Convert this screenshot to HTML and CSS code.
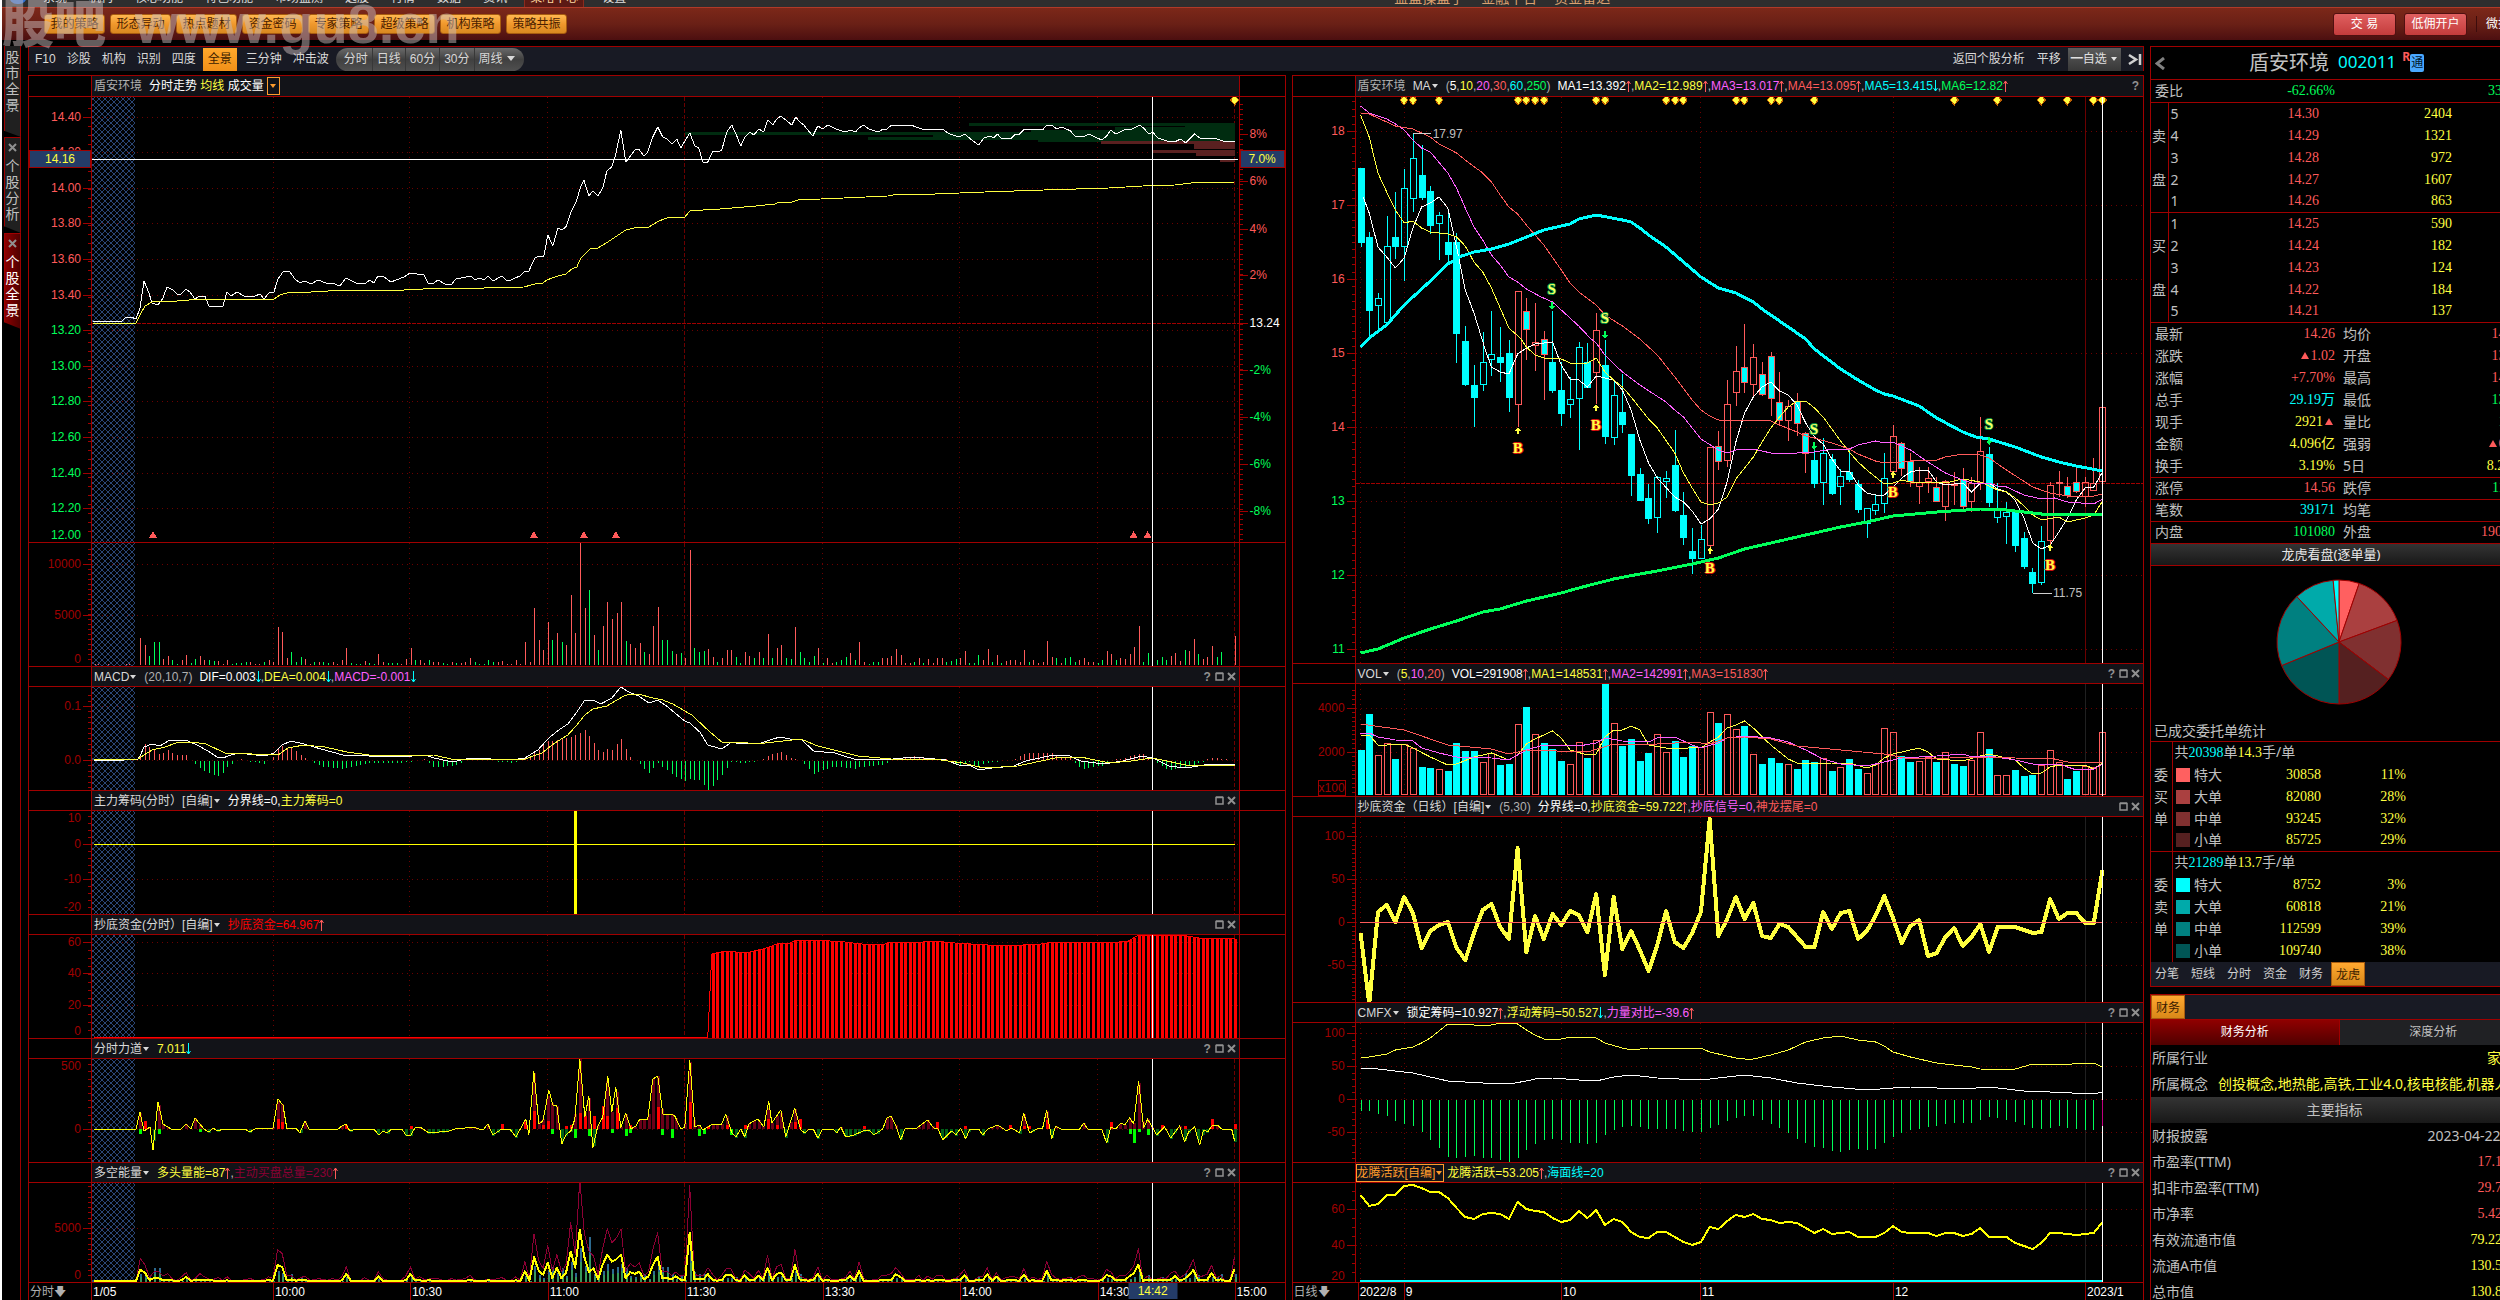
FILE: index.html
```html
<!DOCTYPE html>
<html lang="zh-CN">

<head>
  <meta charset="utf-8">
  <title>盾安环境 002011</title>
  <link rel="stylesheet" href="styles.css">
</head>

<body>
  <svg class="defs" width="0" height="0">
    <defs>
      <symbol id="up" viewBox="0 0 5 12"><path d="M2.5 12V1M0.5 4L2.5 1L4.5 4" fill="none" stroke="#ff5a5a" /></symbol>
      <symbol id="down" viewBox="0 0 5 12"><path d="M2.5 0V11M0.5 8L2.5 11L4.5 8" fill="none" stroke="#00ffff" /></symbol>
      <symbol id="box" viewBox="0 0 9 9"><path d="M1 1.5H8V8H1ZM1 1H8" fill="none" stroke="#909090" stroke-width="1.5" /></symbol>
      <symbol id="close" viewBox="0 0 9 9"><path d="M1 1L8 8M8 1L1 8" fill="none" stroke="#909090" stroke-width="2" /></symbol>
      <pattern id="hatch" width="6" height="6" patternUnits="userSpaceOnUse">
        <path d="M0 0L6 6M6 0L0 6" stroke="#2b4676" fill="none" />
      </pattern>
    </defs>
  </svg>

  <nav class="menu">
    <i class="logo"></i>
    <a href="#" class="m1">系统</a><a href="#" class="m2">机构</a><a href="#" class="m3">核心功能</a><a href="#" class="m3">特色功能</a><a href="#" class="m3">市场监测</a><a href="#" class="m2">选股</a><a href="#" class="m2">行情</a><a href="#" class="m2">数据</a><a href="#" class="m4">资讯</a><a href="#" class="on">策略中心</a><a href="#">设置</a>
    <div class="brand"><span>益盟操盘手</span><span>金融平台</span><span>资金雷达</span></div>
  </nav>

  <header class="toolbar">
    <button>我的策略</button>
    <button>形态异动</button>
    <button>热点题材</button>
    <button>资金密码</button>
    <button>专家策略</button>
    <button>超级策略</button>
    <button>机构策略</button>
    <button>策略共振</button>
    <div class="account">
      <button class="trade">交 易</button>
      <button class="trade">低佣开户</button>
      <a href="#">微拍</a>
    </div>
  </header>
  <div class="watermark"><b>股吧</b><span>www.gu8.cn</span></div>

  <div class="app">
    <div class="strip">
      <button class="tab first"><span>股市全景</span></button>
      <button class="tab"><svg width="9" height="9"><use href="#close" /></svg><span>个股分析</span></button>
      <button class="tab active"><svg width="9" height="9"><use href="#close" /></svg><span>个股全景</span></button>
    </div>

    <main>
      <nav class="views">
        <a href="#">F10</a><a href="#">诊股</a><a href="#">机构</a><a href="#">识别</a><a href="#">四度</a><a href="#" class="on">全景</a><a href="#">三分钟</a><a href="#">冲击波</a>
        <div class="period"><button>分时</button><button>日线</button><button>60分</button><button>30分</button><button>周线 <i class="caret big"></i></button></div>
        <div class="right">
          <a href="#">返回个股分析</a><a href="#">平移</a>
          <button class="pick">━自选 <i class="caret"></i></button>
          <svg width="14" height="13" viewBox="0 0 14 13"><path d="M1 2L8 6.5L1 11M12 1V12" fill="none" stroke="#d0d0d0" stroke-width="2.5" /></svg>
        </div>
      </nav>

      <div class="panels">
        <section class="panel minute">
          <div class="head"><div class="bar"><span class="gray gap">盾安环境</span><span class="white">分时走势 </span><span class="yellow">均线 </span><span class="white">成交量</span><button class="pickbox"><i class="caret"></i></button></div></div>
          <div class="pane" id="price"></div>
          <div class="pane" id="volume"></div>
          <div class="head"><div class="bar"><span class="name">MACD<i class="caret"></i></span><span class="gray gap">(20,10,7)</span><span class="white">DIF=0.003</span><svg class="ar"><use href="#down" /></svg>,<span class="yellow">DEA=0.004</span><svg class="ar"><use href="#down" /></svg>,<span class="pink">MACD=-0.001</span><svg class="ar"><use href="#down" /></svg>
              <div class="tools"><button>?</button><button><svg><use href="#box" /></svg></button><button><svg><use href="#close" /></svg></button></div></div></div>
          <div class="pane" id="macd"></div>
          <div class="head"><div class="bar"><span class="name">主力筹码(分时）[自编]<i class="caret"></i></span><span class="white">分界线=0,</span><span class="yellow">主力筹码=0</span>
              <div class="tools"><button><svg><use href="#box" /></svg></button><button><svg><use href="#close" /></svg></button></div></div></div>
          <div class="pane" id="chips"></div>
          <div class="head"><div class="bar"><span class="name">抄底资金(分时）[自编]<i class="caret"></i></span><span class="bright">抄底资金=64.967</span><svg class="ar"><use href="#up" /></svg>
              <div class="tools"><button><svg><use href="#box" /></svg></button><button><svg><use href="#close" /></svg></button></div></div></div>
          <div class="pane" id="fund"></div>
          <div class="head"><div class="bar"><span class="name">分时力道<i class="caret"></i></span><span class="yellow">7.011</span><svg class="ar"><use href="#down" /></svg>
              <div class="tools"><button>?</button><button><svg><use href="#box" /></svg></button><button><svg><use href="#close" /></svg></button></div></div></div>
          <div class="pane" id="force"></div>
          <div class="head"><div class="bar"><span class="name">多空能量<i class="caret"></i></span><span class="yellow">多头量能=87</span><svg class="ar"><use href="#up" /></svg>,<span class="maroon">主动买盘总量=230</span><svg class="ar"><use href="#up" /></svg>
              <div class="tools"><button>?</button><button><svg><use href="#box" /></svg></button><button><svg><use href="#close" /></svg></button></div></div></div>
          <div class="pane" id="energy"></div>
          <div class="times" id="timesL"><span class="unit">分时🡇</span></div>
        </section>

        <section class="panel daily">
          <div class="head"><div class="bar"><span class="gray gap">盾安环境</span><span class="name">MA<i class="caret"></i></span><span class="gap gray">(<span class="white">5</span>,<span class="yellow">10</span>,<span class="pink">20</span>,<span class="red">30</span>,<span class="cyan">60</span>,<span class="green">250</span>)</span><span class="white">MA1=13.392</span><svg class="ar"><use href="#up" /></svg>,<span class="yellow">MA2=12.989</span><svg class="ar"><use href="#up" /></svg>,<span class="pink">MA3=13.017</span><svg class="ar"><use href="#up" /></svg>,<span class="red">MA4=13.095</span><svg class="ar"><use href="#up" /></svg>,<span class="cyan">MA5=13.415</span><svg class="ar"><use href="#down" /></svg>,<span class="green">MA6=12.82</span><svg class="ar"><use href="#up" /></svg>
              <div class="tools"><button>?</button></div></div></div>
          <div class="pane" id="kline"></div>
          <div class="head"><div class="bar"><span class="name">VOL<i class="caret"></i></span><span class="gray gap">(<span class="yellow">5</span>,<span class="pink">10</span>,<span class="red">20</span>)</span><span class="white">VOL=291908</span><svg class="ar"><use href="#up" /></svg>,<span class="yellow">MA1=148531</span><svg class="ar"><use href="#up" /></svg>,<span class="pink">MA2=142991</span><svg class="ar"><use href="#up" /></svg>,<span class="red">MA3=151830</span><svg class="ar"><use href="#up" /></svg>
              <div class="tools"><button>?</button><button><svg><use href="#box" /></svg></button><button><svg><use href="#close" /></svg></button></div></div></div>
          <div class="pane" id="dvol"></div>
          <div class="head"><div class="bar"><span class="name">抄底资金（日线）[自编]<i class="caret"></i></span><span class="gray gap">(5,30)</span><span class="white">分界线=0,</span><span class="yellow">抄底资金=59.722</span><svg class="ar"><use href="#up" /></svg>,<span class="pink">抄底信号=0,</span><span class="red">神龙摆尾=0</span>
              <div class="tools"><button><svg><use href="#box" /></svg></button><button><svg><use href="#close" /></svg></button></div></div></div>
          <div class="pane" id="dfund"></div>
          <div class="head"><div class="bar"><span class="name">CMFX<i class="caret"></i></span><span class="white">锁定筹码=10.927</span><svg class="ar"><use href="#up" /></svg>,<span class="yellow">浮动筹码=50.527</span><svg class="ar"><use href="#down" /></svg>,<span class="pink">力量对比=-39.6</span><svg class="ar"><use href="#up" /></svg>
              <div class="tools"><button>?</button><button><svg><use href="#box" /></svg></button><button><svg><use href="#close" /></svg></button></div></div></div>
          <div class="pane" id="cmfx"></div>
          <div class="head"><div class="bar"><button class="name picked">龙腾活跃[自编]<i class="caret"></i></button><span class="yellow">龙腾活跃=53.205</span><svg class="ar"><use href="#up" /></svg>,<span class="cyan">海面线=20</span>
              <div class="tools"><button>?</button><button><svg><use href="#box" /></svg></button><button><svg><use href="#close" /></svg></button></div></div></div>
          <div class="pane" id="dragon"></div>
          <div class="times" id="timesR"><span class="unit">日线🡇</span></div>
        </section>
      </div>
    </main>

    <aside>
      <div class="quote">
        <h1><svg width="10" height="13" viewBox="0 0 10 13"><path d="M9 1L2 6.5L9 12" fill="none" stroke="#808080" stroke-width="3" /></svg><span>盾安环境</span><b>002011</b><sup>R</sup><em>通</em></h1>
        <table class="rows">
          <tr class="line"><th>委比</th><td class="green">-62.66%</td><th></th><td class="green">33426</td></tr>
        </table>
        <table class="book">
          <tr><th></th><th>5</th><td>14.30</td><td>2404</td><td></td></tr>
          <tr><th>卖</th><th>4</th><td>14.29</td><td>1321</td><td></td></tr>
          <tr><th></th><th>3</th><td>14.28</td><td>972</td><td></td></tr>
          <tr><th>盘</th><th>2</th><td>14.27</td><td>1607</td><td></td></tr>
          <tr class="line"><th></th><th>1</th><td>14.26</td><td>863</td><td></td></tr>
          <tr><th></th><th>1</th><td>14.25</td><td>590</td><td></td></tr>
          <tr><th>买</th><th>2</th><td>14.24</td><td>182</td><td></td></tr>
          <tr><th></th><th>3</th><td>14.23</td><td>124</td><td></td></tr>
          <tr><th>盘</th><th>4</th><td>14.22</td><td>184</td><td></td></tr>
          <tr class="line"><th></th><th>5</th><td>14.21</td><td>137</td><td></td></tr>
        </table>
        <table class="rows">
          <tr><th>最新</th><td class="red">14.26</td><th>均价</th><td class="red">14.04</td></tr>
          <tr><th>涨跌</th><td class="red"><i class="tri"></i>1.02</td><th>开盘</th><td class="red">13.25</td></tr>
          <tr><th>涨幅</th><td class="red">+7.70%</td><th>最高</th><td class="red">14.40</td></tr>
          <tr><th>总手</th><td class="cyan">29.19万</td><th>最低</th><td class="green">13.22</td></tr>
          <tr><th>现手</th><td class="yellow">2921<i class="tri"></i></td><th>量比</th><td class="green">1.05</td></tr>
          <tr><th>金额</th><td class="yellow">4.096亿</td><th>强弱</th><td class="red"><i class="tri"></i>6.90</td></tr>
          <tr class="line"><th>换手</th><td class="yellow">3.19%</td><th>5日</th><td class="yellow">8.26%</td></tr>
          <tr class="line"><th>涨停</th><td class="red">14.56</td><th>跌停</th><td class="green">11.92</td></tr>
          <tr class="line"><th>笔数</th><td class="cyan">39171</td><th>均笔</th><td></td></tr>
          <tr class="line"><th>内盘</th><td class="green">101080</td><th>外盘</th><td class="red">190828</td></tr>
        </table>
        <h2>龙虎看盘(逐单量)</h2>
        <svg class="pie" id="pie" viewBox="-63 -63 126 126" width="126" height="126"></svg>
        <h3>已成交委托单统计</h3>
        <table class="stats">
          <tr><th></th><td colspan="4">共<span class="cyan num">20398</span>单<span class="yellow num">14.3</span>手/单</td></tr>
          <tr><th>委</th><td><i class="b1"></i></td><td>特大</td><td>30858</td><td>11%</td></tr>
          <tr><th>买</th><td><i class="b2"></i></td><td>大单</td><td>82080</td><td>28%</td></tr>
          <tr><th>单</th><td><i class="b3"></i></td><td>中单</td><td>93245</td><td>32%</td></tr>
          <tr class="line"><th></th><td><i class="b4"></i></td><td>小单</td><td>85725</td><td>29%</td></tr>
          <tr><th></th><td colspan="4">共<span class="cyan num">21289</span>单<span class="yellow num">13.7</span>手/单</td></tr>
          <tr><th>委</th><td><i class="s1"></i></td><td>特大</td><td>8752</td><td>3%</td></tr>
          <tr><th>卖</th><td><i class="s2"></i></td><td>大单</td><td>60818</td><td>21%</td></tr>
          <tr><th>单</th><td><i class="s3"></i></td><td>中单</td><td>112599</td><td>39%</td></tr>
          <tr><th></th><td><i class="s4"></i></td><td>小单</td><td>109740</td><td>38%</td></tr>
        </table>
        <nav class="subtabs"><a href="#">分笔</a><a href="#">短线</a><a href="#">分时</a><a href="#">资金</a><a href="#">财务</a><a href="#" class="on">龙虎</a></nav>
      </div>

      <div class="finance">
        <nav class="subtabs"><a href="#" class="on">财务</a></nav>
        <div class="split"><button class="on">财务分析</button><button>深度分析</button></div>
        <table>
          <tr><th>所属行业</th><td class="yellow">家电&gt;</td></tr>
          <tr><th>所属概念</th><td class="yellow concept">创投概念,地热能,高铁,工业4.0,核电核能,机器人</td></tr>
          <tr><th colspan="2" class="cap">主要指标</th></tr>
          <tr><th>财报披露</th><td>2023-04-22(预)</td></tr>
          <tr><th>市盈率(TTM)</th><td class="red num">17.16倍</td></tr>
          <tr><th>扣非市盈率(TTM)</th><td class="red num">29.73倍</td></tr>
          <tr><th>市净率</th><td class="red num">5.421倍</td></tr>
          <tr><th>有效流通市值</th><td class="yellow num">79.227亿</td></tr>
          <tr><th>流通A市值</th><td class="yellow num">130.53亿</td></tr>
          <tr><th>总市值</th><td class="yellow num">130.85亿</td></tr>
        </table>
      </div>
    </aside>
  </div>

  <script src="charts.js"></script>
</body>

</html>
```
FILE: styles.css
```css
* {
  box-sizing: border-box;
}

body {
  margin: 0;
  height: 100vh;
  display: flex;
  flex-direction: column;
  overflow: hidden;
  border-left: 2px solid #fff;
  background: #000;
  color: #c0c0c0;
  font: 12px/16px "Liberation Sans", "Noto Sans CJK SC", sans-serif;
}

a {
  color: inherit;
  text-decoration: none;
}

button {
  margin: 0;
  padding: 0;
  border: 0;
  background: none;
  color: inherit;
  font: inherit;
  white-space: nowrap;
}

table {
  width: 100%;
  border-collapse: collapse;
  table-layout: fixed;
}

th,
td {
  padding: 0;
  font-weight: normal;
  text-align: left;
  white-space: nowrap;
}

.defs {
  position: absolute;
}

.white { color: #fff; }
.yellow { color: #ffff40; }
.pink { color: #ff60ff; }
.red { color: #ff5a5a; }
.bright { color: #ff0000; }
.cyan { color: #00ffff; }
.green { color: #00ff5a; }
.gray { color: #b0b0b0; }
.maroon { color: #8c0034; }

.caret {
  display: inline-block;
  margin: 0 1px 2px;
  border: 3px solid transparent;
  border-top: 4px solid currentColor;
  border-bottom: 0;
}

.caret.big {
  border-width: 5px 4px 0;
}

/* top menu and toolbar */
.menu {
  display: flex;
  align-items: flex-end;
  height: 7px;
  flex: none;
  overflow: hidden;
  background: #2e2e2e;
  color: #e0e0e0;
}

.menu a {
  flex: none;
  line-height: 14px;
  margin-bottom: 2px;
}

.logo {
  width: 18px;
  height: 16px;
  margin: 0 16px 3px 7px;
  border-radius: 9px;
  background: #2f6fd0;
  flex: none;
}

.menu .m1,
.menu .m2,
.menu .m3 {
  margin-right: 22px;
}

.menu .m4 {
  margin-right: 17px;
}

.menu .on {
  margin: 0 18px 0 0;
  padding: 0 5px 2px;
  border: 1px solid #8c2a1c;
  border-width: 0 1px;
  background: #5c1a14;
  color: #ffd9a0;
}

.brand {
  display: flex;
  gap: 17px;
  margin-left: 768px;
  color: #d9a070;
  font-size: 14px;
  line-height: 18px;
}

.toolbar {
  display: flex;
  align-items: center;
  gap: 5px;
  height: 33px;
  flex: none;
  padding-left: 42px;
  border-top: 1px solid #b03a28;
  background: linear-gradient(#7c2819, #6a2016 50%, #4c0f10);
}

.toolbar button {
  width: 61px;
  height: 20px;
  border: 1px solid #a85c10;
  border-radius: 3px;
  background: linear-gradient(#ffb850, #f0982c 50%, #d98820);
  color: #4a2000;
}

.account {
  display: flex;
  align-items: center;
  gap: 8px;
  margin-left: auto;
  width: 167px;
  overflow: hidden;
  color: #fff;
}

.account .trade {
  flex: none;
  width: 63px;
  height: 23px;
  border-color: #501010;
  background: linear-gradient(#e06060, #c43c3c);
  color: #fff;
}

.account a {
  flex: none;
  margin-left: 1px;
  padding-left: 9px;
  border-left: 1px solid #3c0c0c;
}

.watermark {
  position: absolute;
  left: 2px;
  top: 0;
  display: flex;
  align-items: baseline;
  gap: 29px;
  color: rgba(200, 185, 185, .5);
  font-size: 56px;
  font-weight: bold;
  line-height: 48px;
  pointer-events: none;
}

.watermark b {
  font-size: 52px;
}

/* overall layout */
.app {
  display: flex;
  flex: 1;
  min-height: 0;
  padding-top: 6px;
}

.strip {
  width: 19px;
  margin-right: 7px;
  flex: none;
  border-right: 1px solid #a00000;
}

.tab {
  display: flex;
  flex-direction: column;
  justify-content: flex-start;
  align-items: center;
  width: 17px;
  height: 96px;
  margin-left: 2px;
  border: 1px solid #a00000;
  border-bottom: 0;
  background: #202020;
  clip-path: polygon(0 0, 100% 0, 100% 100%, 0 93%);
  color: #c0c0c0;
  font-size: 14px;
  line-height: 16px;
}

.tab.first {
  height: 91px;
  padding-top: 3px;
  border-top: 0;
}

.tab svg {
  margin: 5px 0 6px;
  flex: none;
}

.tab span {
  width: 14px;
  white-space: normal;
}

.tab.active {
  background: linear-gradient(90deg, #8c0000, #500000);
  color: #fff;
}

main {
  display: flex;
  flex-direction: column;
  flex: 1;
  min-width: 0;
}

.views {
  display: flex;
  align-items: center;
  height: 25px;
  flex: none;
  margin-bottom: 4px;
  padding-left: 1px;
  border: 1px solid #a00000;
  border-bottom: 0;
  background: #181a24;
  color: #d8d8d8;
}

.views > a {
  padding: 0 5px;
  margin-right: 1px;
  line-height: 23px;
}

.views > .on {
  margin: 0 4px 0 1px;
  background: linear-gradient(#ffa82c, #f09018);
  color: #3a1c00;
}

.period {
  display: flex;
  margin-left: 1px;
  height: 23px;
  padding: 0 4px;
  border-radius: 12px;
  background: linear-gradient(#6a6a6a, #404040 50%, #505050);
}

.period button {
  padding: 0 4px;
  border-left: 1px solid #383838;
}

.period button:first-child {
  border: 0;
}

.views .right {
  display: flex;
  align-items: center;
  margin-left: auto;
}

.right a {
  margin-right: 12px;
}

.right svg {
  margin-right: 1px;
}

.pick {
  height: 23px;
  margin: 0 7px 0 -5px;
  padding: 0 3px;
  background: linear-gradient(#5a5a5a, #383838);
  color: #e0e0e0;
}

.panels {
  display: flex;
  flex: 1;
  min-height: 0;
  gap: 6px;
}

.panel {
  display: grid;
  min-width: 0;
  border: 1px solid #a00000;
  border-bottom: 0;
}

.minute {
  flex: 1258 1 0;
  grid-template-rows: 21px 446fr 124fr 20px 104fr 20px 104fr 20px 104fr 20px 104fr 20px 100fr 17px;
}

.daily {
  flex: 852 1 0;
  grid-template-rows: 21px 567fr 20px 113fr 20px 186fr 20px 140fr 20px 100fr 17px;
}

/* indicator header rows */
.head {
  min-height: 0;
  padding: 0 45px 0 62px;
  border-bottom: 1px solid #a00000;
}

.daily .head {
  padding-right: 0;
}

.bar {
  display: flex;
  align-items: center;
  height: 100%;
  padding-left: 2px;
  border: 1px solid #a00000;
  border-width: 0 1px;
  background: #121318;
  white-space: pre;
}

.daily .bar {
  border-right: 0;
}

.bar .gap,
.bar .name {
  margin-right: 7px;
}

.name {
  color: #d8d8d8;
}

.bar .picked {
  height: 18px;
  margin-left: -2px;
  margin-right: 3px;
  border: 1px solid #ff9c2c;
  color: #ff9c2c;
}

.pickbox {
  width: 13px;
  height: 18px;
  margin-left: 3px;
  border: 1px solid #ff9c2c;
  color: #ff9c2c;
  line-height: 14px;
}

.ar {
  width: 5px;
  height: 12px;
  flex: none;
}

.tools {
  display: flex;
  align-items: center;
  gap: 3px;
  margin-left: auto;
  padding-right: 3px;
  color: #909090;
  font-weight: bold;
}

.tools button {
  width: 9px;
  line-height: 10px;
}

.tools svg {
  display: block;
  width: 9px;
  height: 9px;
}

/* chart panes */
.pane {
  display: grid;
  grid-template-columns: 62px 1fr 45px;
  min-height: 0;
  border-bottom: 1px solid #a00000;
}

.daily .pane {
  grid-template-columns: 62px 1fr;
}

.scale,
.plot {
  position: relative;
  min-height: 0;
  min-width: 0;
}

.plot {
  border: 1px solid #a00000;
  border-width: 0 1px;
}

.daily .plot {
  border-right: 0;
}

.plot > svg {
  position: absolute;
  width: 100%;
  height: 100%;
}

.plot path,
.plot line {
  vector-effect: non-scaling-stroke;
}

.plot path {
  shape-rendering: crispEdges;
}

.scale span {
  position: absolute;
  right: 10px;
  transform: translateY(-50%);
  color: #a00000;
  line-height: 14px;
}

.scale.far span {
  left: 10px;
  right: auto;
}

.scale .red { color: #ff5a5a; }
.scale .green { color: #00ff5a; }
.scale .white { color: #fff; }

.scale .unitbox {
  right: 9px;
  border: 1px solid #a00000;
}

.scale i {
  position: absolute;
  right: 0;
  width: 3px;
  height: 1px;
  background: #a00000;
}

.scale i.major {
  width: 8px;
}

.scale.far i {
  left: 0;
  right: auto;
}

.scale span.badge {
  left: 0;
  right: 0;
  border: 1px solid #a00000;
  background: #243c68;
  color: #ffff40;
  line-height: 16px;
  text-align: center;
}

.mark {
  position: absolute;
  transform: translate(-50%, -50%);
  font: bold 15px/14px "Liberation Serif", serif;
}

.mark.buy {
  color: #ffff40;
  text-shadow: -1px 0 #e01010, 1px 0 #e01010, 0 1px #e01010, 0 -1px #e01010;
}

.mark.sell {
  color: #ffff60;
  text-shadow: -1px 0 #009848, 1px 0 #009848, 0 1px #009848, 0 -1px #009848;
}

.note {
  position: absolute;
  transform: translateY(-50%);
  line-height: 14px;
}

.times {
  position: relative;
  color: #fff;
}

.times span {
  position: absolute;
  top: 0;
  padding: 1px 0 0 1px;
  border-left: 1px solid #a00000;
  line-height: 16px;
}

.times .unit {
  left: 0;
  border: 0;
  color: #b0b0b0;
}

.times .badge {
  width: 49px;
  padding: 0;
  border: 0;
  transform: translateX(-50%);
  background: #243c68;
  color: #ffff40;
  text-align: center;
}

/* quote sidebar, runs off the right edge */
aside {
  width: 350px;
  flex: none;
  margin-left: 6px;
  overflow: hidden;
  font: 14px/20px "Noto Sans", "Noto Sans CJK SC", sans-serif;
}

.quote,
.finance {
  width: 378px;
  border: 1px solid #a00000;
}

.quote {
  margin-bottom: 7px;
}

h1 {
  display: flex;
  align-items: center;
  height: 33px;
  margin: 0;
  padding-left: 4px;
  border-bottom: 1px solid #a00000;
  font-size: 20px;
  font-weight: normal;
}

h1 span {
  margin-left: 84px;
}

h1 b {
  margin: 0 6px 2px 9px;
  color: #00ffff;
  font-size: 17px;
  font-weight: normal;
}

h1 sup {
  margin-bottom: 12px;
  color: #ff5a5a;
  font-size: 12px;
  font-weight: bold;
}

h1 em {
  width: 14px;
  border-radius: 2px;
  background: #4aa8ff;
  color: #001830;
  font-size: 12px;
  font-style: normal;
  line-height: 18px;
  text-align: center;
}

.rows tr,
.book tr,
.stats tr {
  height: 22px;
}

.line {
  border-bottom: 1px solid #a00000;
}

.rows th {
  width: 50px;
  padding-left: 4px;
}

.rows td {
  padding-right: 4px;
  text-align: right;
}

.rows td,
.book td,
.num,
.stats td:nth-child(4),
.stats td:nth-child(5) {
  font-family: "Liberation Serif", "Noto Sans CJK SC", serif;
}

.tri {
  display: inline-block;
  margin: 0 2px 1px;
  border: 4px solid transparent;
  border-top: 0;
  border-bottom: 7px solid #ff5a5a;
}

.book th:first-child {
  width: 17px;
  padding-left: 1px;
  border-right: 1px solid #a00000;
}

.book th:nth-child(2) {
  width: 20px;
  padding-left: 2px;
}

.book td {
  width: 131px;
  color: #ff5a5a;
  text-align: right;
}

.book td:nth-child(4) {
  width: 133px;
  color: #ffff40;
}

.book td:nth-child(5) {
  width: auto;
}

h2 {
  height: 22px;
  margin: 0;
  padding-right: 16px;
  border-bottom: 1px solid #a00000;
  background: linear-gradient(#343434, #181818);
  color: #e8e8e8;
  font-size: 13px;
  font-weight: normal;
  text-align: center;
}

.pie {
  display: block;
  margin: 13px auto 17px;
}

h3 {
  height: 20px;
  margin: 0;
  padding-left: 3px;
  border-bottom: 1px solid #a00000;
  font-size: 14px;
  font-weight: normal;
  line-height: 18px;
}

.stats {
  table-layout: auto;
  line-height: 18px;
}

.stats th {
  width: 21px;
  padding-left: 3px;
  border-right: 1px solid #a00000;
}

.stats td {
  padding-left: 2px;
}

.stats td:nth-child(2):not([colspan]) {
  width: 20px;
  padding-left: 3px;
}

.stats td:nth-child(3) {
  width: 40px;
}

.stats td:nth-child(4) {
  width: 89px;
  color: #ffff40;
  text-align: right;
}

.stats td:nth-child(5) {
  padding-right: 121px;
  color: #ffff40;
  text-align: right;
}

.stats i {
  display: block;
  width: 14px;
  height: 14px;
}

.b1 { background: #ff6060; }
.b2 { background: #aa4040; }
.b3 { background: #803030; }
.b4 { background: #552020; }
.s1 { background: #00ffff; }
.s2 { background: #00aaaa; }
.s3 { background: #008080; }
.s4 { background: #005555; }

.subtabs {
  display: flex;
  gap: 4px;
  height: 24px;
  background: #181a24;
  color: #d0d0d0;
  font-size: 12px;
  line-height: 23px;
}

.subtabs a {
  width: 32px;
  text-align: center;
}

.subtabs .on {
  width: 34px;
  border: 1px solid #a85c10;
  background: linear-gradient(#ffa830, #d98818);
  color: #3a1c00;
}

.split {
  display: flex;
  height: 26px;
  border-top: 1px solid #a00000;
}

.split button {
  flex: 1;
  background: #202124;
  font-size: 12px;
}

.split .on {
  border-right: 1px solid #a00000;
  background: linear-gradient(#900000, #500000);
  color: #fff;
}

.finance tr {
  height: 26px;
}

.finance th {
  width: 124px;
  padding-left: 1px;
}

.finance td {
  padding-right: 4px;
  text-align: right;
}

.finance .concept {
  position: relative;
  left: -57px;
  overflow: visible;
  text-align: left;
}

.finance .cap {
  padding-right: 10px;
  background: linear-gradient(#343434, #181818);
  text-align: center;
}
```
FILE: charts.js
```js
const RED = '#ff5a5a', GREEN = '#00ff5a', YELLOW = '#ffff40', CYAN = '#00ffff', PINK = '#ff60ff', LINE = '#a00000';

const nums = s => s.trim().split(/\s+/).map(Number);
const pairs = s => s.trim().split(/\s+/).map(p => p.split(',').map(Number));
const minX = i => 135.7 + 4.58 * i;      // minute of the session
const dayX = i => 1360.5 + 8.725 * i;    // trading day
const days = s => pairs(s).map(p => [dayX(p[0]), p[1]]);
const series = s => nums(s).map((y, i) => [dayX(i), y]);

const path = (pts, color, w = 1) =>
  `<path d="M${pts.map(p => p.join(' ')).join('L')}" fill="none" stroke="${color}" stroke-width="${w}" stroke-linejoin="round"/>`;
const rect = (x, y, w, h, fill, stroke) =>
  `<rect x="${x}" y="${y}" width="${w}" height="${h}" fill="${fill}"${stroke ? ` stroke="${stroke}"` : ''} shape-rendering="crispEdges"/>`;
const line = (x1, y1, x2, y2, color, dash = '') =>
  `<line x1="${x1}" y1="${y1}" x2="${x2}" y2="${y2}" stroke="${color}" stroke-dasharray="${dash}" shape-rendering="crispEdges"/>`;

function at(pts, x) {
  for (let k = 1; k < pts.length; k++) {
    if (x <= pts[k][0]) {
      const [a, b] = [pts[k - 1], pts[k]];
      return a[1] + (b[1] - a[1]) * (x - a[0]) / ((b[0] - a[0]) || 1);
    }
  }
  return pts[pts.length - 1][1];
}

// labels: [text, y, class, 0 when it has no gridline]
function scale(labels, top, h, cls, step) {
  let html = '';
  const pct = y => ((y - top) / h * 100).toFixed(3) + '%';
  const first = labels.find(l => l[3] !== 0);
  for (let y = first[1]; y > top + 3; y -= step) html += `<i style="top:${pct(y)}"></i>`;
  for (let y = first[1]; y < top + h - 2; y += step) html += `<i style="top:${pct(y)}"></i>`;
  for (const [text, y, c, grid] of labels) {
    html += `<span class="${c || ''}" style="top:${pct(y)}">${text}</span>`;
    if (grid !== 0) html += `<i class="major" style="top:${pct(y)}"></i>`;
  }
  return `<div class="scale ${cls}">${html}</div>`;
}

function pane(id, top, h, labels, step, body, opt = {}) {
  const left = !opt.daily;
  const x0 = left ? 92 : 1356, w = left ? 1147 : 787;
  let g = '';
  for (const [, y, , grid] of labels) if (grid !== 0) g += line(x0, y, x0 + w, y, '#6c0000', '1 4');
  for (const x of left ? [274, 410, 548, 685, 823, 960, 1098, 1235] : [1360, 1404, 1561, 1700, 1893])
    g += line(x, top, x, top + h, '#6c0000', x === 685 || x === 1235 ? '4 2' : '1 4');
  if (left) g += `<rect x="92" y="${top}" width="43" height="${h}" fill="url(#hatch)"/>`;
  else g += line(2085, top, 2085, top + h, id === 'kline' ? '#6c0000' : '#202020');
  const cross = left ? line(1153, top, 1153, top + h, '#fff') : line(2102, top, 2102, top + h, '#fff');
  document.getElementById(id).innerHTML = scale(labels, top, h, '', step) +
    `<div class="plot"><svg viewBox="${x0} ${top} ${w} ${h}" preserveAspectRatio="none">${g}${body}${cross}</svg>${opt.html || ''}</div>` +
    (left ? (opt.far || '<div></div>') : '');
}

const diamond = (x, y) => `<path d="M${x - 4} ${y}L${x} ${y - 5}L${x + 4} ${y}L${x} ${y + 5}Z" fill="${YELLOW}" stroke="#c06000"/>`;

/* ---- intraday price ---- */
const price = pairs(`93,321 122,321 126,317 131,317 136,319 140,308 144,281 149,293 152,303 158,305 163,298 167,287 173,290 177,294 181,294 186,289 190,292
195,299 200,296 205,296 209,306 223,306 227,292 231,296 237,292 244,296 255,296 260,294 264,299 269,293 274,292 278,279 283,272 286,271 290,272 295,279
300,283 305,281 311,284 318,280 326,283 332,283 340,286 346,278 358,284 366,283 370,280 374,283 378,276 383,276 391,282 404,277 410,273 424,275 428,283
434,283 438,280 445,284 452,284 456,279 471,276 475,280 480,278 484,280 488,276 493,281 502,276 506,280 511,280 520,276 525,271 529,271 535,258 539,256
544,256 548,235 553,246 558,228 562,230 566,227 572,210 577,200 580,189 584,180 589,196 593,191 598,196 603,188 607,171 612,167 616,154 621,130 626,162
635,150 639,149 644,156 648,152 653,137 658,127 663,137 667,139 672,144 677,139 681,148 690,133 695,146 699,148 703,162 708,162 713,151 718,152 722,150
727,132 732,125 737,136 741,146 745,137 750,132 754,135 759,129 764,132 768,120 773,125 777,119 781,116 786,120 792,125 796,117 800,122 804,125 813,136
818,126 823,129 828,125 836,129 846,132 850,130 856,132 859,128 864,125 869,129 879,132 883,129 887,129 892,125 911,125 922,129 943,129 948,133 956,136
961,136 965,134 972,140 979,145 984,138 990,136 994,138 998,134 1001,138 1011,139 1016,134 1020,134 1025,129 1043,130 1047,125 1052,125 1057,129 1062,127
1071,131 1075,136 1085,136 1089,134 1102,140 1107,136 1111,130 1116,134 1124,130 1132,129 1140,125 1145,129 1149,134 1153,132 1158,138 1167,141 1177,141
1181,139 1186,143 1195,134 1200,138 1215,138 1223,141 1235,141`);
const average = pairs(`93,323 136,323 140,315 145,306 152,302 177,301 189,300 198,299 274,299 280,295 290,292 311,292 345,290 404,290 442,288 484,288 524,287
535,284 543,283 547,280 558,276 566,274 572,269 577,267 581,258 590,249 598,248 608,242 617,236 626,230 638,227 649,227 659,221 667,218 685,217 690,211
703,210 720,209 756,206 775,204 780,202 792,202 798,200 844,198 888,196 899,194 935,194 985,192 1044,190 1109,188 1143,186 1175,185 1191,183 1235,182`);

let body = '';
for (const [x, y, h] of [[969, 123, 3], [1185, 126, 1], [1115, 127, 3], [1031, 130, 2], [685, 132, 3], [933, 135, 2], [868, 137, 3], [1038, 140, 2]])
  body += rect(x, y, 1235 - x, h, '#002c10');
for (const [x, y, h] of [[1101, 141, 3], [1194, 144, 5], [1152, 150, 3], [1196, 153, 3], [1220, 159, 3]])
  body += rect(x, y, 1235 - x, h, '#5a2020');
body += line(92, 323, 1239, 323, LINE, '4 1') + path(price, '#fff') + path(average, YELLOW) + line(92, 159, 1238, 159, '#fff') + diamond(1235, 100);
for (const x of [153, 534, 584, 616, 1134, 1148]) body += `<path d="M${x - 4} 538L${x} 531L${x + 4} 538Z" fill="${RED}"/>`;
const priceLabels = [];
for (let k = 0; k < 12; k++) priceLabels.push([(14.4 - k * 0.2).toFixed(2), Math.round(116.5 + 35.6 * k), k < 6 ? 'red' : 'green']);
priceLabels.push(['12.00', 535, 'green', 0], ['14.16', 159, 'badge', 0]);
const pctLabels = [['8%', 134, 'red'], ['6%', 181, 'red'], ['4%', 229, 'red'], ['2%', 275, 'red'], ['13.24', 323, 'white'], ['-2%', 370, 'green'],
  ['-4%', 417, 'green'], ['-6%', 464, 'green'], ['-8%', 511, 'green'], ['7.0%', 159, 'badge', 0]];
pane('price', 97, 445, priceLabels, 9, body, { far: scale(pctLabels, 97, 445, 'far', 5) });

/* ---- intraday volume, one bar per minute ---- */
const vol = `r27 r20 g9 g23 g23 r6 r9 g5 g1 r5 r10 g2 g6 r9 r5 g5 g4 r4 r1 r5 g1 g2 g2 g3 r3 r1 r1 g3 r5 r3 r38 r33 r7 g13 g3 g8 r6 r1 g3 r3 g3 g2 r3 r1 r5 r17
g2 g1 g1 r4 g2 g1 r11 r3 g2 g2 g2 r1 r6 r17 g5 r5 r2 g5 r3 r3 g2 g1 r3 g2 r2 r3 r7 g3 g1 g1 g5 g3 r3 r4 r1 r1 r5 r1 r23 r3 r57 r25 r15 r43 g25 r32 g23 r20
r70 r32 r122 r57 g75 r30 g15 r39 r63 r46 r52 r63 g24 r21 r17 r22 g13 r11 r39 r58 g25 g25 g14 r11 g12 r7 r115 g17 g13 g14 r16 r8 g3 r7 r15 r15 g8 g2 r13 r9
g7 r13 g7 r31 g7 r17 r20 g7 g6 r38 g13 g7 g3 g9 r17 g2 r7 r2 g3 g5 g8 r12 g5 r23 r3 g1 g3 g3 r7 r7 r9 r16 r10 r2 r2 g3 r7 g2 r6 r2 r7 r7 g3 g4 g6 r7 r14 g2
g2 g10 r5 r16 g3 r10 g2 r4 r5 r5 r3 r15 g3 r5 r2 r3 r24 r8 g7 r2 g7 g8 g3 r5 r7 r3 r3 g2 g5 r14 r11 g5 r7 r6 r11 r18 r39 g3 g12 g5 g5 g8 g5 r9 r12 r4 g15
r14 r26 g11 r6 r8 r19 g8 g13 g0 g0 r29`.split(/\s+/).map(s => ({ up: s[0] === 'r', h: +s.slice(1) }));
body = '';
vol.forEach((v, k) => body += rect(Math.round(minX(k + 1)), 665 - v.h, 1, v.h, v.up ? RED : GREEN));
for (const x of [95, 98, 108, 126, 129]) body += rect(x, 664, 1, 1, RED);
pane('volume', 543, 123, [['10000', 564], ['5000', 615], ['0', 659, '', 0]], 5, body);

/* ---- MACD ---- */
const dif = pairs(`94,760 124,760 138,759 140,756 144,747 152,744 160,746 168,741 186,740 199,746 208,751 217,757 223,758 228,756 238,753 256,755 265,756
274,753 282,745 291,741 304,744 321,749 343,755 369,756 399,757 425,755 434,758 453,762 470,758 512,760 525,758 538,750 549,738 559,730 568,724 577,712
585,700 593,700 601,704 612,698 621,687 629,692 639,696 649,703 658,700 668,707 680,717 685,721 690,723 700,732 708,745 722,749 732,742 741,744 761,743
780,737 790,739 801,739 814,751 835,753 854,759 883,760 913,757 946,760 959,765 969,765 979,770 992,768 1014,766 1026,761 1054,755 1070,756 1081,761
1104,764 1123,761 1142,756 1153,758 1169,766 1186,768 1211,764 1235,765`);
const dea = pairs(`94,760 138,759 144,755 152,750 165,747 176,743 191,742 206,744 225,753 278,755 288,748 304,745 325,747 347,752 369,755 403,756 434,755 451,759
525,759 542,753 555,743 568,735 577,725 585,715 593,709 607,706 624,696 631,694 642,695 653,698 663,700 673,704 692,715 708,730 722,742 748,743 765,743
801,739 818,746 858,756 891,759 934,759 963,763 984,768 1018,766 1060,757 1081,757 1110,763 1131,761 1153,758 1186,765 1235,765`);
body = '';
for (let i = 1; i <= 240; i++) {
  const h = Math.round((at(dea, minX(i)) - at(dif, minX(i))) * 2);
  if (h > 0) body += rect(Math.round(minX(i)), 760 - h, 1, h, RED);
  if (h < 0) body += rect(Math.round(minX(i)), 761, 1, -h, GREEN);
}
pane('macd', 687, 103, [['0.1', 706], ['0.0', 760]], 5.4, body + path(dif, '#fff') + path(dea, YELLOW));

/* ---- chips ---- */
pane('chips', 811, 103, [['10', 818, '', 0], ['0', 844], ['-10', 879], ['-20', 907, '', 0]], 7,
  line(94, 844, 1235, 844, '#ffff00') + rect(574, 811, 3, 103, '#ffff00'));

/* ---- fund ---- */
const fund = pairs(`712,954 726,951 746,953 763,949 772,946 780,943 790,943 796,940 816,940 845,942 862,944 883,945 889,942 913,943 934,941 955,943 988,945 1020,946
1026,944 1041,944 1054,942 1102,942 1110,943 1129,941 1139,935 1182,935 1199,938 1235,939`);
body = path([[94, 1037], [708, 1037], ...fund], '#ff0000');
for (let i = 126; i <= 240; i++) {
  const x = Math.round(minX(i)), y = Math.round(at(fund, x));
  body += rect(x - 1, y, 3, 1038 - y, '#ff0000');
}
pane('fund', 935, 103, [['60', 942], ['40', 973], ['20', 1005], ['0', 1031, '', 0]], 8, body);

/* ---- force ---- */
const force = pairs(`94,1129 136,1129 140,1112 144,1131 150,1127 153,1150 158,1102 163,1124 171,1129 181,1129 186,1124 191,1129 195,1118 199,1123 204,1129 209,1132
213,1128 218,1131 223,1129 245,1129 250,1132 255,1129 273,1128 278,1099 283,1105 287,1129 296,1128 300,1133 305,1121 309,1129 337,1130 342,1126 346,1124
350,1131 356,1129 374,1129 379,1135 383,1131 387,1133 392,1129 402,1129 406,1135 411,1135 415,1128 420,1127 429,1133 449,1131 455,1129 465,1128 474,1127
479,1129 484,1129 488,1124 493,1135 502,1129 510,1129 516,1137 526,1119 529,1135 534,1071 539,1124 543,1121 549,1090 553,1105 557,1106 562,1144 566,1135
571,1131 575,1119 580,1059 585,1117 589,1096 593,1148 598,1126 603,1117 608,1076 612,1112 616,1087 621,1128 626,1113 631,1129 636,1126 640,1119 648,1119
653,1079 658,1076 663,1114 671,1114 675,1116 681,1129 685,1127 690,1060 695,1127 700,1125 703,1130 713,1124 722,1124 726,1114 732,1133 736,1137 741,1129
745,1137 749,1124 758,1119 764,1127 769,1101 772,1123 781,1110 786,1137 795,1108 801,1130 805,1133 809,1129 814,1130 818,1138 823,1129 833,1129 837,1133
841,1127 846,1137 854,1135 866,1130 870,1131 874,1135 883,1129 887,1118 891,1116 896,1125 901,1140 905,1129 917,1128 928,1120 934,1128 938,1128 943,1140
952,1131 956,1135 961,1128 966,1139 970,1129 979,1129 983,1135 988,1129 998,1125 1007,1131 1012,1128 1020,1133 1024,1113 1030,1133 1039,1128 1043,1128
1047,1110 1052,1139 1056,1126 1061,1129 1080,1129 1084,1123 1088,1129 1102,1129 1107,1143 1111,1127 1116,1129 1121,1123 1125,1125 1130,1118 1134,1124
1139,1081 1144,1128 1148,1119 1157,1135 1165,1127 1171,1138 1180,1126 1185,1142 1189,1132 1195,1127 1200,1145 1204,1130 1208,1132 1213,1125 1218,1125
1222,1129 1232,1129 1235,1141`);
body = '';
for (let i = 1; i <= 240; i++) {
  const x = Math.round(minX(i)), y = Math.round(at(force, minX(i)));
  if (y < 1128) body += rect(x - 1, y, 3, 1129 - y, '#680018');
  if (y > 1130) body += rect(x - 1, 1129, 3, y - 1128, '#006018');
}
for (const [i, h] of pairs(`2,8 31,10 32,7 46,4 60,3 80,5 85,7 87,18 89,4 90,8 94,3 95,4 97,16 98,13 100,13 102,23 103,13 105,21 108,4 114,22 121,27 125,3 129,4
133,4 138,10 140,4 144,7 145,10 159,3 175,7 181,3 191,4 194,3 195,3 199,9 213,7 224,4 229,3 235,10 240,5`))
  body += rect(Math.round(minX(i)) - 1, 1129 - h, 3, h, '#ff0000');
for (const [i, h] of pairs('1,5 5,5 14,3 91,5 96,9 99,7 104,4 107,7 108,4 115,6 117,9 123,7 124,5 130,6 217,5 218,14 219,3 221,6'))
  body += rect(Math.round(minX(i)) - 1, 1129, 3, h, '#00ff00');
pane('force', 1059, 103, [['500', 1066, '', 0], ['0', 1129]], 7.2, body + path(force, '#ffff00'));

/* ---- energy, follows the volume ---- */
const bought = vol.map((v, k) => [minX(k + 1), 1281 - (v.up ? v.h * 0.83 : v.h * 0.4)]);
const longs = vol.map((v, k) => [minX(k + 1), 1281 - (v.up && v.h > 9 ? v.h * 0.42 : v.h * 0.12)]);
body = '';
vol.forEach((v, k) => {
  const x = Math.round(minX(k + 1)), h = Math.round(v.h * (v.up ? 0.28 : 0.6)), g = Math.round(h * 0.6);
  body += rect(x, 1282 - h, 2, h, '#2c6a90') + rect(x, 1282 - g, 2, g, '#38985c');
});
body += path([[94, 1281], [136, 1281], ...bought], '#8c0034') + path([[94, 1281], [136, 1281], ...longs], '#ffff00', 2);
pane('energy', 1183, 99, [['5000', 1228], ['0', 1275, '', 0]], 5.2, body);

/* ---- candles: kind, high, low, body top, body bottom ----
   c falling, h hollow cyan, r rising, m filled with a red edge */
const candles = `c168,247,168,243 c232,337,237,311 h293,333,298,306 h216,325,246,323 c192,259,237,247 h169,281,188,247 h134,212,158,199 c145,200,175,198
c186,234,191,226 h212,260,215,224 c209,262,242,255 c233,363,242,334 c326,386,341,385 c365,427,385,398 h332,391,362,385 h311,376,354,360 c327,382,357,363
c340,412,353,398 r291,427,291,405 m298,360,311,330 r303,371,342,346 m331,400,339,355 c311,393,362,391 c362,426,390,414 h377,418,399,405 h342,450,347,399
c343,388,362,388 r313,404,330,373 c340,444,365,437 h380,445,395,438 c374,433,412,425 c434,496,434,476 c468,501,474,501 c484,524,498,519 h476,533,477,518
h471,498,478,482 c430,512,465,511 c492,545,515,538 c528,574,551,559 h525,559,539,559 r447,547,447,546 m431,470,446,462 r380,467,404,461 r346,406,371,393
m324,393,367,383 r344,396,357,385 m362,396,374,395 m352,416,356,399 m372,425,402,421 r400,441,406,421 m393,436,401,424 m432,473,433,454 c450,488,460,484
h438,505,453,483 c454,495,459,494 h469,505,476,487 c448,482,472,480 c480,513,484,510 h508,538,508,524 h495,515,504,511 h453,513,478,504 r425,472,436,472
m442,476,443,469 m453,487,461,482 r467,504,482,487 r467,493,478,482 m477,502,487,502 r480,521,481,507 r472,505,484,486 m468,510,479,507 r477,512,483,502
r417,490,451,483 c447,507,454,503 h483,523,508,518 h502,544,512,517 c510,552,512,546 c532,569,538,567 c568,593,572,584 h526,585,541,583 r482,546,485,541
r471,497,482,484 m477,498,486,496 m465,493,482,492 r477,507,482,497 r458,491,483,491 r394,482,407,482`.split(/\s+/);
body = line(1356, 483, 2143, 483, LINE, '4 1');
candles.forEach((s, i) => {
  const kind = s[0], [hi, lo, t, b] = s.slice(1).split(',').map(Number);
  const x = Math.round(dayX(i)), c = kind === 'c' || kind === 'h' ? CYAN : RED;
  body += rect(x, hi, 1, t - hi, c) + rect(x, b, 1, Math.max(lo - b, 0), c);
  body += kind === 'c' ? rect(x - 3, t, 7, b - t, CYAN) : rect(x - 2.5, t + .5, 6, Math.max(b - t - 1, 1), kind === 'm' ? CYAN : 'none', c);
});
body += path(days(`0.3,197 1,213 2,247 3,257 4,268 5,258 6,228 7,207 8,203 9,197 10,208 11,247 12,290 13,313 14.3,350 15,367 16,372 17,374 18,354 19,348 20,344 21,343
22,342 23,365 24,379 25,380 26,387 27,376 28,378 29,380 30,390 31,410 32,440 33,463 34,478 36,497 37,502 38,511 39,524 40,519 41,509 42,482 43,442 44,413
45,397 46,387 47,382 48,391 49,395 50,405 51,423 52,437 53,444 54,459 55,471 56,471 57,485 58,493 59,495 60,495 61,487 62,478 63,472 64,470 65,470 66,482
67,485 69,483 70,492 71,483 72,483 73,489 74,492 75,500 76,518 77,543 78,549 79,545 80,532 81,518 82,500 83,488 84,487 85,472`), '#fff');
body += path(days(`0,115 1,137 2,173 3,192 4,210 5,223 6,221 7,228 8,232 9,233 10,234 11,237 12,246 13,262 14,272 15,288 16,308 17,328 18.3,338 19,347 20,355 21,358
23,359 24,363 26,363 27,358 28,372 29,380 30,387 31,397 32,408 33,419 34,428 36,453 37,473 38,488 39,502 40,505 41,503 42,497 43,479 44,468 45,457 46,442
47,428 48,417 49,407 50,401 51,401 52,408 53,417 55,441 56,452 57,462 58,470 59,477 60,484 61,483 62,480 63,482 67,483 69,479 71,482 73,490 74,492 75,498
76,506 77,515 78,520 80,517 81,522 83,518 84,515 85,501`), YELLOW);
body += path(days(`0,106 1,113 3,119 4,124 5,130 6,140 7,148 8,152 10,173 11,188 12,208 13,227 14,240 15,255 16,265 17,277 18,282 19,289 20.7,297 22,302 23,310
25,326 26.3,338 27,343 28,355 30,372 32,385 35,402 36,410 37,417 39,439 41,450 42,453 43,450 45,449 47,453 50,453 52,452 54,449 56,449 57,445 59,441 60,443
61,442 62,446 63,450 65,462 67,473 69,480 70,483 72,483 73,486 74,487 76,495 78,499 79.5,498 81,502 84,504 85,499`), PINK);
body += path(days(`0,113 1,114 2,118 4,126 6,129 7,133 8,137 9,144 11,153 12,160 14,173 15,182 16,195 17,207 18,214 19,225 21,245 23,270 24,283 25,292 27,305
28,315 30,326 32,339 34,355 36,377 38,400 39,410 40,416 41,420 47,421 48,425 50,432 51,436 52,438 54,443 56,449 57,454 59,461 60,463 62,462 64,460 66,460
67,457 69,454 71,455 72,458 74,470 77,487 79,493 81,496 84,496 85,494`), RED);
body += path(days(`0,347 1,338 3,325 4,315 5,305 6,297 8,281 10,264 11.6,256 13,252 15,249 17,244 19,237 21,230 23,226 24,224 25,219 27,215 30,220 31,222 32,228
33,235 35,247 37,262 39,277 41,288 43,293 45,302 46,309 48,321 51,339 52,349 55,369 57,380 58,385 59,390 60,394 61,396 64,406 66,418 69,432 70.5,437 72,439
75,447 78,457 80,462 82,466 85,471`), CYAN, 3);
body += path(days(`0,653 2,649 5,638 8,629 11,621 14,612 16,609 19,601 23,593 25,588 29,579 32,574 34,571 38,564 41,558 44,549 46,545 50,537 55,527 58,522 61,516
66,512 71,509 74,510 78,514 82,514 85,514`), GREEN, 3);
for (const i of [5, 6, 9, 18, 19, 20, 21, 27, 28, 35, 36, 37, 43, 44, 47, 48, 52, 68, 73, 78, 81, 84, 85]) body += diamond(Math.round(dayX(i)), 100);
body += line(1413, 133, 1431, 133, '#d0d0d0') + line(2033, 593, 2052, 593, '#d0d0d0');

let marks = '';
const spot = (x, y) => `left:${((x - 1356) / 787 * 100).toFixed(3)}%;top:${((y - 97) / 566 * 100).toFixed(3)}%`;
for (const [i, y] of [[22, 289], [28, 318], [52, 429], [72, 424]]) {
  const x = Math.round(dayX(i)), a = y + 13;
  marks += `<span class="mark sell" style="${spot(x, y)}">S</span>`;
  body += `<path d="M${x - 1} ${a}h2v4h2l-3 4l-3-4h2z" fill="${GREEN}"/>`;
}
for (const [i, y] of [[18, 448], [27, 425], [40, 568], [61, 492], [79, 565]]) {
  const x = Math.round(dayX(i)), a = y - 14;
  marks += `<span class="mark buy" style="${spot(x, y)}">B</span>`;
  body += `<path d="M${x - 1} ${a}h2v-3h2l-3-4l-3 4h2z" fill="${YELLOW}"/>`;
}
marks += `<span class="note" style="${spot(1433, 134)}">17.97</span><span class="note" style="${spot(2053, 593)}">11.75</span>`;
const kLabels = [18, 17, 16, 15, 14, 13, 12, 11].map((p, k) => [p, 131 + 74 * k, p > 13 ? 'red' : 'green']);
pane('kline', 97, 566, kLabels, 7.4, body, { daily: true, html: marks });

/* ---- daily volume ---- */
const dvol = `c45 c81 r40 r52 c36 r51 r47 c28 c27 r26 c24 c52 c44 c44 r33 r42 c30 c31 r71 c88 r61 c52 c46 c34 r31 r53 c37 r55 c112 r72 c49 c56 c34 c42 r61 r43 c54
c38 c49 r48 r83 c72 r81 r66 c69 r41 c31 c37 c32 r31 c26 c35 c33 r37 c24 r28 c36 c26 r22 r31 r67 r63 c39 c33 r34 r38 c33 r43 c31 c29 r35 r63 c46 r20 r20 c25
c19 c20 r30 r45 r33 c16 c24 r29 r28 r63`.split(/\s+/);
body = '';
dvol.forEach((s, i) => {
  const x = Math.round(dayX(i)), h = +s.slice(1);
  body += s[0] === 'c' ? rect(x - 3, 795 - h, 7, h, CYAN) : rect(x - 2.5, 795.5 - h, 6, h - 1, 'none', RED);
});
body += path(days(`0,735 1,735 2,745 3,745 5,744 6,748 8,757 10,765 11,764 13,757 15,753 17,760 18,755 19,744 20,739 22,731 23,738 24,750 26,755 27,754 28,737 29,730
30,730 31,726 32,730 33,745 35,748 37,749 38,747 39,748 40,742 41,737 42,728 43,725 44,721 45,728 47,745 49,759 50,763 51,764 54,763 56,763 58,768 59,765
60,758 61,754 64,748 65,752 66,759 69,761 71,756 72,754 74,758 75,760 76,768 77,774 78,773 79,767 80,765 82,765 83,765 84,769 85,763`), YELLOW);
body += path(days(`0,734 1,733 2,737 4,740 6,741 7,748 9,753 11,757 14,757 17,760 19,750 21,745 25,746 27,743 28,738 30,741 33,742 34,738 36,737 38,745 39,748 41,743
42,738 44,736 47,738 49,742 51,750 53,759 55,764 58,766 60,762 62,758 66,756 69,754 70,757 72,756 75,760 77,764 80,764 82,770 84,769 85,764`), PINK);
body += path(days(`0,724 5,730 8,739 10,745 15,749 17,754 19,750 26,752 29,744 34,744 38,742 40,744 42,738 44,737 47,739 50,746 55,750 60,754 63,759 72,757 78,759
79,758 81,762 85,763`), RED);
pane('dvol', 684, 112, [['4000', 708], ['2000', 752], ['x100', 788, 'unitbox', 0]], 4.4, body, { daily: true });

/* ---- daily fund ---- */
const dfund = series(`933 1004 912 905 922 897 913 948 931 925 922 948 960 933 910 904 927 939 848 952 916 939 914 925 911 915 932 894 975 897 949 931 950 971 945
911 942 948 933 912 819 936 919 897 919 903 936 938 924 927 937 947 947 912 929 913 911 939 931 916 896 918 943 926 920 956 953 937 928 946 937 924 952 927
927 927 930 933 932 899 919 913 913 923 923 870`);
pane('dfund', 817, 185, [['100', 836], ['50', 879], ['0', 922], ['-50', 965]], 4.3,
  path(dfund, YELLOW, 4) + line(1360, 922, 2102, 922, RED), { daily: true });

/* ---- CMFX ---- */
body = '';
nums(`11 11 14 16 21 24 26 32 40 48 57 58 57 56 58 58 60 62 58 50 44 40 39 40 43 43 44 43 35 30 27 26 27 29 29 29 29 31 32 32 28 25 21 18 16 16 20 24 28 33 39 43
47 48 51 52 50 49 50 49 43 37 33 30 29 27 26 24 23 23 23 20 17 18 20 22 25 28 29 28 26 28 29 30 30`)
  .forEach((h, i) => body += rect(Math.round(dayX(i)), 1100, 1, h, GREEN));
body += path(days(`0,1057 1,1057 3,1054 4,1050 6,1047 7,1043 8,1038 9,1031 10,1024 12,1024 13,1025 15,1025 16,1023 18,1024 19,1030 20,1035 21,1039 23,1039 24,1037
27,1038 28,1043 30,1048 31,1050 33,1048 36,1049 39,1048 40,1052 43,1058 44,1059 45,1059 47,1055 49,1050 51,1042 53,1038 55,1036 57,1040 59,1042 60,1046
61,1052 63,1057 66,1063 68,1065 70,1067 71,1069 73,1070 75,1069 77,1064 79,1064 80,1065 83,1063 84,1063 85,1067`), YELLOW);
body += path(days(`0,1068 2,1069 6,1073 8,1077 10,1081 14,1083 17,1084 19,1081 20,1079 22,1078 25,1080 27,1081 29,1077 31,1075 34,1078 39,1080 41,1078 44,1075
47,1078 50,1083 54,1087 58,1090 61,1088 63,1087 69,1089 72,1087 76,1091 79,1092 84,1094 85,1092`), '#fff');
pane('cmfx', 1023, 139, [['100', 1033], ['50', 1066], ['0', 1099], ['-50', 1132]], 6.6, body, { daily: true });
document.querySelector('#cmfx svg').insertAdjacentHTML('beforeend', rect(2102, 1100, 1, 26, '#c00080'));

/* ---- dragon ---- */
const dragon = series(`1195 1206 1204 1195 1195 1186 1185 1188 1192 1192 1198 1208 1217 1219 1214 1213 1214 1219 1202 1209 1211 1212 1218 1222 1220 1211 1218 1210
1225 1219 1222 1232 1237 1238 1232 1232 1237 1242 1245 1242 1227 1229 1221 1215 1217 1214 1219 1220 1223 1222 1223 1228 1233 1229 1234 1233 1232 1237 1237
1237 1233 1226 1232 1233 1233 1233 1236 1233 1233 1236 1234 1228 1237 1237 1237 1243 1246 1249 1243 1233 1233 1234 1235 1234 1233 1222`);
pane('dragon', 1183, 99, [['60', 1209], ['40', 1245], ['20', 1276, '', 0]], 9,
  path(dragon, '#ffff00', 2) + rect(1360, 1280, 742, 2, CYAN), { daily: true });

/* ---- time axes ---- */
function times(id, x0, w, list) {
  const html = list.map(([t, x, c]) => `<span class="${c || ''}" style="left:${((x - x0) / w * 100).toFixed(3)}%">${t}</span>`).join('');
  document.getElementById(id).insertAdjacentHTML('beforeend', html);
}
times('timesL', 29, 1256, [['1/05', 91], ['10:00', 273], ['10:30', 410], ['11:00', 548], ['11:30', 685], ['13:30', 823], ['14:00', 960], ['14:30', 1098],
  ['15:00', 1235], ['14:42', 1153, 'badge']]);
times('timesR', 1293, 850, [['2022/8', 1358], ['9', 1404], ['10', 1561], ['11', 1700], ['12', 1893], ['2023/1', 2085]]);

/* ---- order size pie ---- */
const slices = [[30858, '#ff6060'], [82080, '#aa4040'], [93245, '#803030'], [85725, '#552020'], [109740, '#005555'], [112599, '#008080'], [60818, '#00aaaa'], [8752, '#00ffff']];
const total = slices.reduce((s, p) => s + p[0], 0);
let angle = -Math.PI / 2, pie = '';
for (const [v, fill] of slices) {
  const next = angle + v / total * Math.PI * 2;
  pie += `<path d="M0 0L${62 * Math.cos(angle)} ${62 * Math.sin(angle)}A62 62 0 0 1 ${62 * Math.cos(next)} ${62 * Math.sin(next)}Z" fill="${fill}" stroke="${LINE}"/>`;
  angle = next;
}
document.getElementById('pie').innerHTML = pie;
```
